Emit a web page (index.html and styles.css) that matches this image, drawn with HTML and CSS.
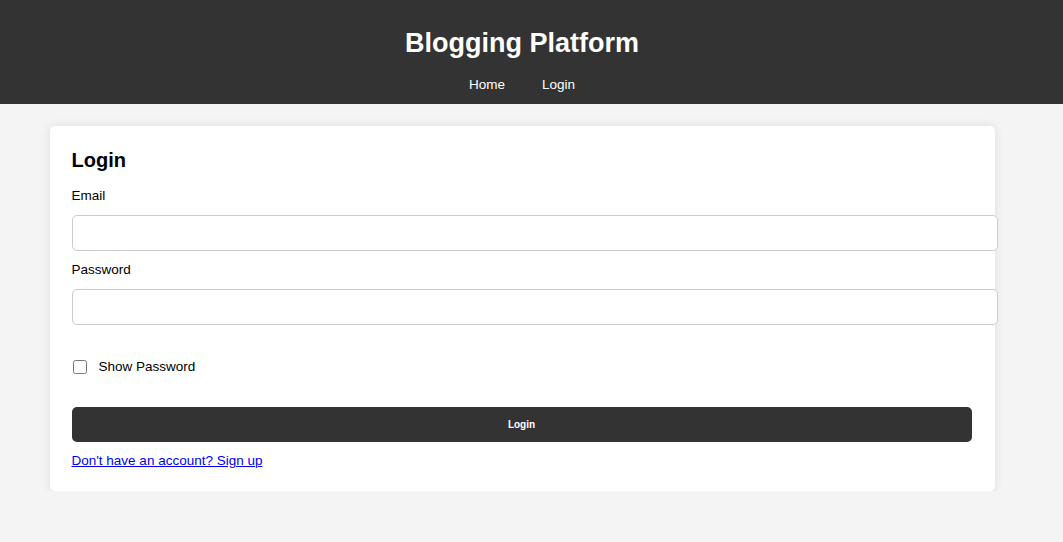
FILE: index.html
```html
<!DOCTYPE html>
<html lang="en">
<head>
<meta charset="utf-8">
<title>Blogging Platform</title>
<link rel="stylesheet" href="styles.css">
</head>
<body>
<header class="site-header">
  <h1 class="site-title">Blogging Platform</h1>
  <nav class="site-nav">
    <a href="#" class="nav-link">Home</a>
    <a href="#" class="nav-link">Login</a>
  </nav>
</header>
<div class="page">
  <main class="card">
    <h2 class="card-title">Login</h2>
    <form class="form">
      <label class="field-label" for="email">Email</label>
      <input class="field-input" id="email" type="email">
      <label class="field-label" for="password">Password</label>
      <input class="field-input" id="password" type="password">
      <label class="check-row"><input type="checkbox" class="check"> Show Password</label>
      <button type="button" class="submit">Login</button>
    </form>
    <a href="#" class="signup">Don't have an account? Sign up</a>
  </main>
</div>
</body>
</html>
```
FILE: styles.css
```css
html, body {
  margin: 0;
  padding: 0;
}
body {
  background: #f4f4f4;
  font-family: "Liberation Sans", Arial, sans-serif;
  font-size: 13.5px;
  color: #000;
}
.site-header {
  background: #333;
  color: #fff;
  text-align: center;
  padding: 27px 19px 11px 0;
}
.site-title {
  margin: 0;
  font-size: 27px;
  line-height: 32px;
  font-weight: bold;
}
.site-nav {
  display: flex;
  justify-content: center;
  gap: 37px;
  margin-top: 17px;
  padding-top: 1px;
  line-height: 16px;
}
.nav-link {
  color: #fff;
  text-decoration: none;
}
.page {
  width: 1044px;
  padding-top: 22px;
}
.card {
  background: #fff;
  width: 901px;
  margin: 0 auto;
  padding: 23px 22px 22px 22px;
  border-radius: 5px;
  box-shadow: 0 0 10px rgba(0,0,0,0.1);
}
.card-title {
  margin: 0 0 15px;
  font-size: 20px;
  line-height: 23px;
  font-weight: bold;
}
.form {
  display: flex;
  flex-direction: column;
  align-items: flex-start;
}
.field-label {
  display: block;
  line-height: 16px;
  padding-top: 1px;
  margin-bottom: 11px;
}
.field-input {
  width: 900px;
  box-sizing: content-box;
  padding: 0 12px;
  height: 34px;
  border: 1px solid #ccc;
  border-radius: 5px;
  margin: 0 0 10px;
  font-size: 14px;
  font-family: inherit;
}
.check-row {
  display: flex;
  align-items: center;
  margin-top: 23px;
  padding-top: 1px;
  line-height: 16px;
}
.check {
  width: 14px;
  height: 14px;
  margin: 0 12px 0 1px;
}
.submit {
  margin-top: 32px;
  width: 900px;
  height: 35px;
  background: #333;
  color: #fff;
  border: none;
  border-radius: 5px;
  font-family: inherit;
  font-size: 10px;
  font-weight: bold;
}
.signup {
  display: inline-block;
  margin-top: 10px;
  padding-top: 1px;
  color: #0000ee;
  text-decoration: underline;
  line-height: 16px;
}
```
